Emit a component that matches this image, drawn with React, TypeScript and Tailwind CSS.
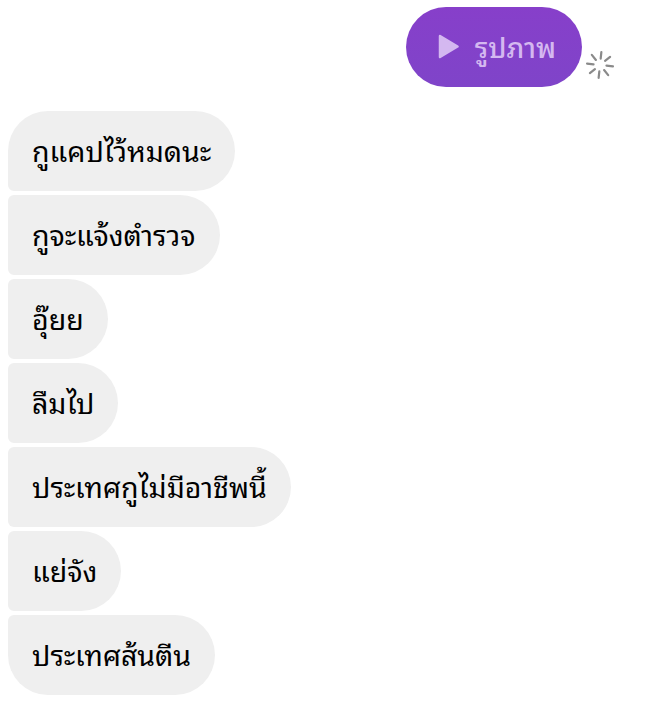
const incoming = [
  "กูแคปไว้หมดนะ",
  "กูจะแจ้งตำรวจ",
  "อุ๊ยย",
  "ลืมไป",
  "ประเทศกูไม่มีอาชีพนี้",
  "แย่จัง",
  "ประเทศส้นตีน",
];

const spokes = [0, 45, 90, 135, 180, 225, 270, 315];

function Spinner() {
  return (
    <svg width="30" height="30" viewBox="0 0 30 30" className="shrink-0">
      {spokes.map((deg) => (
        <line
          key={deg}
          x1="15"
          y1="2"
          x2="15"
          y2="8.5"
          stroke="#8a8a8a"
          strokeWidth="2.2"
          strokeLinecap="round"
          transform={`rotate(${deg + 6} 15 15)`}
        />
      ))}
    </svg>
  );
}

export default function App() {
  return (
    <div className="min-h-screen bg-white pt-[7px] font-['Noto_Sans_Thai_Looped','Noto_Sans',sans-serif]">
      <div className="flex items-end justify-end pr-[31px]">
        <div className="flex h-20 items-center gap-4 rounded-[40px] bg-gradient-to-b from-[#873fca] to-[#7f44c9] pb-0.5 pl-8 pr-[26px]">
          <svg width="21" height="25" viewBox="0 0 21 25">
            <path
              d="M2 2 L19.5 12.5 L2 23 Z"
              fill="#d4b8f0"
              stroke="#d4b8f0"
              strokeWidth="2.5"
              strokeLinejoin="round"
            />
          </svg>
          <span className="text-[28px] font-medium text-[#d4b8f0]">รูปภาพ</span>
        </div>
        <div className="ml-[3px] mb-[7px]">
          <Spinner />
        </div>
      </div>

      <div className="mt-6 flex flex-col items-start gap-1 pl-2">
        {incoming.map((text) => (
          <div
            key={text}
            className="flex h-20 items-center rounded-[40px] rounded-bl-[6px] rounded-tl-[6px] bg-[#efefef] px-6 pb-1 text-[28.5px] font-[430] text-black first:rounded-tl-[40px] last:rounded-bl-[40px]"
          >
            {text}
          </div>
        ))}
      </div>
    </div>
  );
}
